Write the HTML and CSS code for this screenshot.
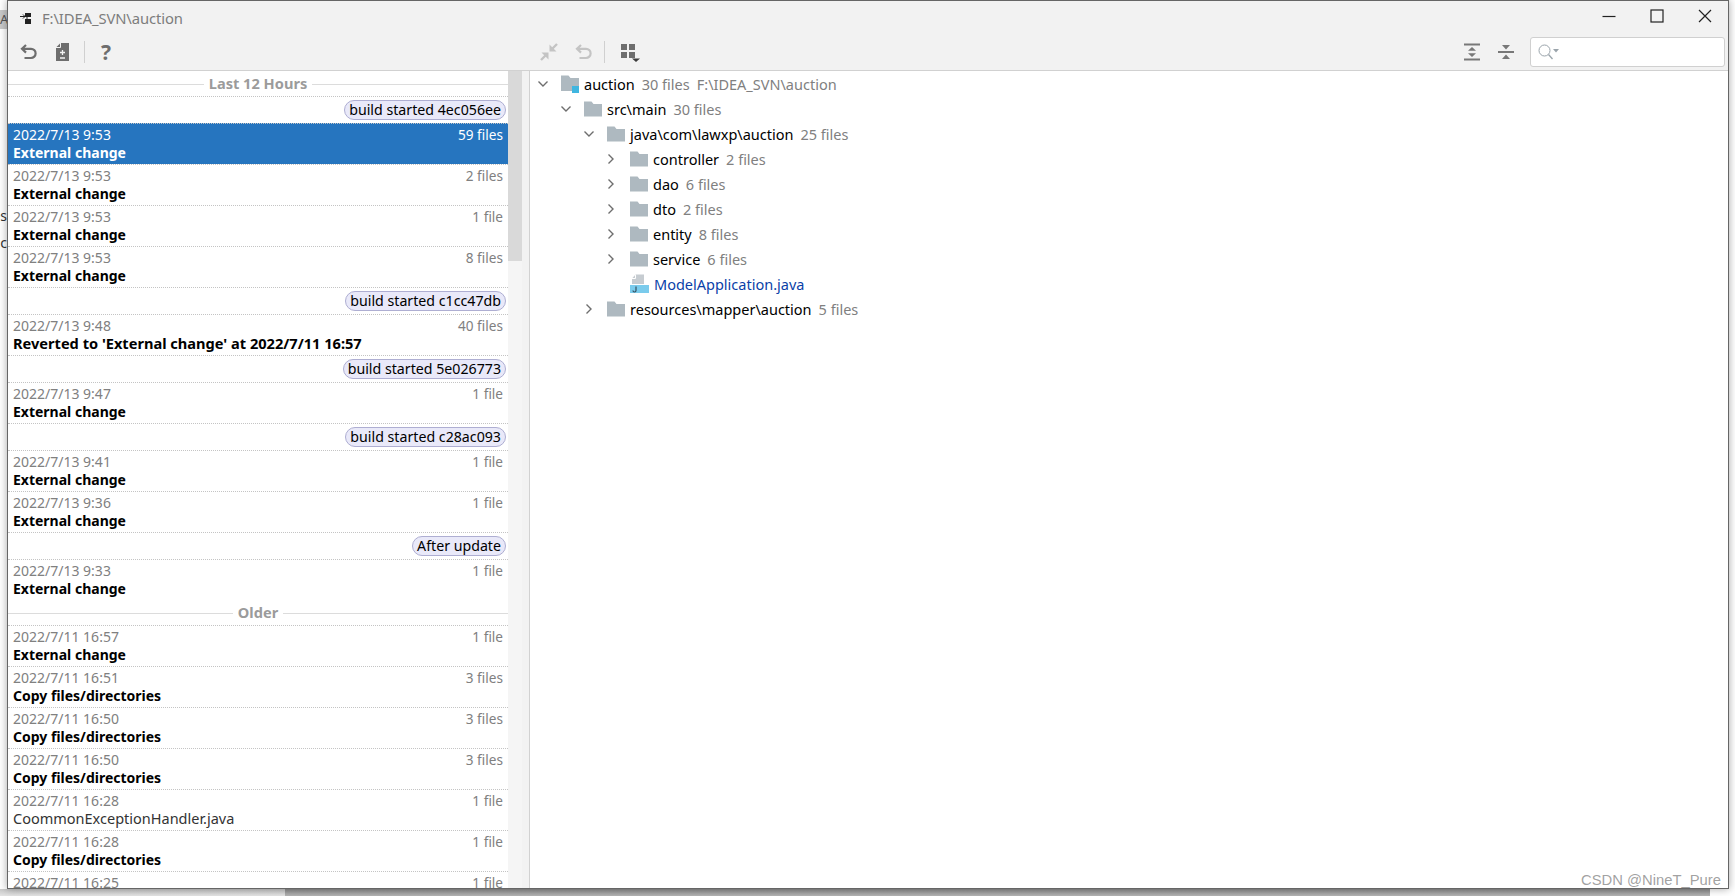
FILE: index.html
```html
<!DOCTYPE html>
<html lang="en">
<head>
<meta charset="utf-8">
<title>Local History</title>
<link rel="stylesheet" href="styles.css">
</head>
<body>
<svg class="defs" width="0" height="0" aria-hidden="true">
  <symbol id="folder" viewBox="0 0 18 16"><path d="M0 0.5H7.5L9.5 3H18V15.5H0Z" fill="#aeb9c0"/></symbol>
  <symbol id="down" viewBox="0 0 12 12"><path d="M1.5 3.5L6 8L10.5 3.5" fill="none" stroke="#6e6e6e" stroke-width="1.4"/></symbol>
  <symbol id="right" viewBox="0 0 12 12"><path d="M3.5 1.5L8 6L3.5 10.5" fill="none" stroke="#6e6e6e" stroke-width="1.4"/></symbol>
  <symbol id="undo" viewBox="0 0 17 16"><path d="M6 1L2 4.8L6 8.6M2.4 4.8H11A4.6 4.6 0 0 1 11 14H4.5" fill="none" stroke="currentColor" stroke-width="2.2"/></symbol>
  <symbol id="merge" viewBox="0 0 18 18"><path d="M17 1L11 7M7 11L1 17" fill="none" stroke="currentColor" stroke-width="2.4"/><path d="M9.5 1.5V8.5H16.5ZM1.5 9.5H8.5V16.5Z" fill="currentColor"/></symbol>
</svg>

<div class="bg-chip">A</div>
<div class="bg-text bg-es">es</div>
<div class="bg-text bg-c">c</div>

<main class="window">
  <header class="titlebar">
    <svg class="app-icon" width="11" height="11" viewBox="0 0 11 11"><path d="M5 0H11V4H5ZM5 6H11V11H5Z" fill="#222"/><path d="M0 3.5H5M3 1.5L5 3.5L3 5.5M7 4V7" fill="none" stroke="#222" stroke-width="1"/></svg>
    <span class="title">F:\IDEA_SVN\auction</span>
    <div class="controls">
      <button class="ctl" aria-label="Minimize"><svg width="14" height="14" viewBox="0 0 14 14"><path d="M0.5 7.5H13.5" stroke="#222" stroke-width="1.2"/></svg></button>
      <button class="ctl" aria-label="Maximize"><svg width="14" height="14" viewBox="0 0 14 14"><rect x="1" y="1" width="12" height="12" fill="none" stroke="#222" stroke-width="1.2"/></svg></button>
      <button class="ctl ctl-last" aria-label="Close"><svg width="14" height="14" viewBox="0 0 14 14"><path d="M1 1L13 13M13 1L1 13" stroke="#222" stroke-width="1.2"/></svg></button>
    </div>
  </header>

  <nav class="toolbar">
    <div class="tools-left">
      <svg class="tool dark" width="17" height="16"><use href="#undo"/></svg>
      <svg class="tool patch" width="13" height="18" viewBox="0 0 13 18"><path d="M4.5 0H13V18H0V4.5Z" fill="#6e6e6e"/><path d="M6.5 7V12M4 9.5H9M4 15H9" stroke="#f2f2f2" stroke-width="1.3" fill="none"/><path d="M4.5 0V4.5H0" fill="none" stroke="#f2f2f2" stroke-width="1"/></svg>
      <span class="sep sep-a"></span>
      <span class="help">?</span>
    </div>
    <div class="tools-mid">
      <svg class="tool light" width="18" height="18"><use href="#merge"/></svg>
      <svg class="tool light undo2" width="17" height="16"><use href="#undo"/></svg>
      <span class="sep sep-b"></span>
      <svg class="tool grid" width="20" height="18" viewBox="0 0 20 18"><path d="M0 0H6V6H0ZM8 0H14V6H8ZM0 8H6V14H0ZM8 8H14V14H8Z" fill="#6e6e6e"/><path d="M11 14.5H19L15 18Z" fill="#3c3c3c"/></svg>
    </div>
    <div class="tools-right">
      <svg class="tool" width="16" height="18" viewBox="0 0 16 18"><path d="M0 0.5H16V2.5H0ZM0 15.5H16V17.5H0Z" fill="#787878"/><path d="M8 4L12 7.7H4ZM8 14L4 10.3H12Z" fill="#787878"/></svg>
      <svg class="tool collapse" width="16" height="16" viewBox="0 0 16 16"><path d="M0 7H16V9H0Z" fill="#787878"/><path d="M8 5.5L4 1H12ZM8 10.5L12 15H4Z" fill="#787878"/></svg>
      <div class="search">
        <svg width="22" height="16" viewBox="0 0 22 16"><circle cx="6.5" cy="6.5" r="5.5" fill="none" stroke="#9aa4ab" stroke-width="1"/><path d="M10.5 10.5L14.5 15" stroke="#9aa4ab" stroke-width="1.3"/><path d="M15 5H21L18 8.5Z" fill="#9aa4ab"/></svg>
      </div>
    </div>
  </nav>

  <div class="body">
    <section class="history">
      <div class="list">
        <div class="group"><span class="group-name">Last 12 Hours</span></div>
        <div class="label"><span class="pill">build started 4ec056ee</span></div>
        <article class="row selected"><div class="meta"><span>2022/7/13 9:53</span><span class="count">59 files</span></div><div class="name">External change</div></article>
        <article class="row"><div class="meta"><span>2022/7/13 9:53</span><span class="count">2 files</span></div><div class="name">External change</div></article>
        <article class="row"><div class="meta"><span>2022/7/13 9:53</span><span class="count">1 file</span></div><div class="name">External change</div></article>
        <article class="row"><div class="meta"><span>2022/7/13 9:53</span><span class="count">8 files</span></div><div class="name">External change</div></article>
        <div class="label"><span class="pill">build started c1cc47db</span></div>
        <article class="row"><div class="meta"><span>2022/7/13 9:48</span><span class="count">40 files</span></div><div class="name long">Reverted to 'External change' at 2022/7/11 16:57</div></article>
        <div class="label"><span class="pill">build started 5e026773</span></div>
        <article class="row"><div class="meta"><span>2022/7/13 9:47</span><span class="count">1 file</span></div><div class="name">External change</div></article>
        <div class="label"><span class="pill">build started c28ac093</span></div>
        <article class="row"><div class="meta"><span>2022/7/13 9:41</span><span class="count">1 file</span></div><div class="name">External change</div></article>
        <article class="row"><div class="meta"><span>2022/7/13 9:36</span><span class="count">1 file</span></div><div class="name">External change</div></article>
        <div class="label"><span class="pill">After update</span></div>
        <article class="row"><div class="meta"><span>2022/7/13 9:33</span><span class="count">1 file</span></div><div class="name">External change</div></article>
        <div class="group"><span class="group-name">Older</span></div>
        <article class="row"><div class="meta"><span>2022/7/11 16:57</span><span class="count">1 file</span></div><div class="name">External change</div></article>
        <article class="row"><div class="meta"><span>2022/7/11 16:51</span><span class="count">3 files</span></div><div class="name">Copy files/directories</div></article>
        <article class="row"><div class="meta"><span>2022/7/11 16:50</span><span class="count">3 files</span></div><div class="name">Copy files/directories</div></article>
        <article class="row"><div class="meta"><span>2022/7/11 16:50</span><span class="count">3 files</span></div><div class="name">Copy files/directories</div></article>
        <article class="row"><div class="meta"><span>2022/7/11 16:28</span><span class="count">1 file</span></div><div class="name plain">CoommonExceptionHandler.java</div></article>
        <article class="row"><div class="meta"><span>2022/7/11 16:28</span><span class="count">1 file</span></div><div class="name">Copy files/directories</div></article>
        <article class="row"><div class="meta"><span>2022/7/11 16:25</span><span class="count">1 file</span></div><div class="name">Copy files/directories</div></article>
      </div>
      <div class="scrollbar"><div class="thumb"></div></div>
    </section>
    <div class="splitter"></div>
    <section class="tree">
      <div class="node l0"><svg class="chev" width="12" height="12"><use href="#down"/></svg>
        <svg class="ficon" width="18" height="18" viewBox="0 0 18 18"><path d="M0 0.5H7.5L9.5 3H18V12H12V16H0Z" fill="#aeb9c0"/><rect x="11" y="11" width="8" height="7" fill="#40b6e0"/></svg>
        <span class="n">auction</span><span class="c">30 files</span><span class="c">F:\IDEA_SVN\auction</span></div>
      <div class="node l1"><svg class="chev" width="12" height="12"><use href="#down"/></svg><svg class="ficon" width="18" height="16"><use href="#folder"/></svg><span class="n">src\main</span><span class="c">30 files</span></div>
      <div class="node l2"><svg class="chev" width="12" height="12"><use href="#down"/></svg><svg class="ficon" width="18" height="16"><use href="#folder"/></svg><span class="n">java\com\lawxp\auction</span><span class="c">25 files</span></div>
      <div class="node l3"><svg class="chev" width="12" height="12"><use href="#right"/></svg><svg class="ficon" width="18" height="16"><use href="#folder"/></svg><span class="n">controller</span><span class="c">2 files</span></div>
      <div class="node l3"><svg class="chev" width="12" height="12"><use href="#right"/></svg><svg class="ficon" width="18" height="16"><use href="#folder"/></svg><span class="n">dao</span><span class="c">6 files</span></div>
      <div class="node l3"><svg class="chev" width="12" height="12"><use href="#right"/></svg><svg class="ficon" width="18" height="16"><use href="#folder"/></svg><span class="n">dto</span><span class="c">2 files</span></div>
      <div class="node l3"><svg class="chev" width="12" height="12"><use href="#right"/></svg><svg class="ficon" width="18" height="16"><use href="#folder"/></svg><span class="n">entity</span><span class="c">8 files</span></div>
      <div class="node l3"><svg class="chev" width="12" height="12"><use href="#right"/></svg><svg class="ficon" width="18" height="16"><use href="#folder"/></svg><span class="n">service</span><span class="c">6 files</span></div>
      <div class="node l3"><span class="chev-space"></span><svg class="ficon" width="19" height="19" viewBox="0 0 19 19"><path d="M5.5 0.5H14V10H2V4.5Z" fill="#c6ccd1"/><path d="M5.5 0.5V4.5H2" fill="none" stroke="#fff" stroke-width="1"/><rect x="0" y="11" width="19" height="8" fill="#7acbec"/><path d="M6 12.5V16.5A1.5 1.5 0 0 1 3 16.5" fill="none" stroke="#35505f" stroke-width="1.2"/></svg><span class="n file">ModelApplication.java</span></div>
      <div class="node l2"><svg class="chev" width="12" height="12"><use href="#right"/></svg><svg class="ficon" width="18" height="16"><use href="#folder"/></svg><span class="n">resources\mapper\auction</span><span class="c">5 files</span></div>
    </section>
  </div>
  <span class="watermark">CSDN @NineT_Pure</span>
</main>

<footer class="desk">
  <div class="desk-light"></div>
  <div class="desk-dark"></div>
  <div class="desk-end"></div>
</footer>
</body>
</html>
```
FILE: styles.css
```css
* { box-sizing: border-box; }
html, body { height: 100%; }
body {
  margin: 0;
  height: 896px;
  overflow: hidden;
  position: relative;
  background: #fff;
  font-family: "Noto Sans", "Open Sans", sans-serif;
  font-size: 14px;
  display: flex;
  flex-direction: column;
}
.defs { position: absolute; }

.bg-chip {
  position: absolute; left: 0; top: 10px; width: 7px; height: 19px;
  background: #c9c9c9; color: #555; font-size: 13px; line-height: 19px; overflow: hidden;
}
.bg-text { position: absolute; right: calc(100% - 7px); font-size: 14px; color: #333; line-height: 16px; white-space: nowrap; }
.bg-es { top: 208px; }
.bg-c { top: 235px; }

.window {
  position: relative;
  z-index: 1;
  width: 1722px;
  height: 889px;
  margin-left: 7px;
  flex: none;
  display: flex;
  flex-direction: column;
  background: #f2f2f2;
  border: 1px solid #666;
  box-shadow: 0 0 8px rgba(0,0,0,.35);
}

.titlebar { height: 34px; display: flex; align-items: center; padding-left: 12px; flex: none; }
.app-icon { flex: none; }
.title { margin-left: 11px; color: #7d7d7d; font-size: 14.8px; letter-spacing: -.1px; }
.controls { margin-left: auto; display: flex; align-self: flex-start; }
.ctl { width: 48px; height: 30px; border: 0; padding: 0; background: none; display: flex; align-items: center; justify-content: center; }
.ctl-last { width: 47px; }

.toolbar { height: 36px; padding-bottom: 1px; display: flex; align-items: center; flex: none; border-bottom: 1px solid #d1d1d1; }
.tools-left { width: 532px; display: flex; align-items: center; padding-left: 12px; }
.tools-mid { display: flex; align-items: center; }
.tools-right { margin-left: auto; display: flex; align-items: center; }
.tool { display: block; flex: none; }
.dark { color: #6e6e6e; }
.light { color: #c4c4c4; }
.patch { margin-left: 19px; }
.sep { width: 1px; height: 22px; background: #d0d0d0; flex: none; }
.sep-a { margin-left: 15px; }
.help { margin-left: 16px; font-size: 21px; font-weight: 700; line-height: 22px; color: #6e6e6e; }
.undo2 { margin-left: 17px; }
.sep-b { margin-left: 12px; }
.grid { margin-left: 16px; margin-top: 1px; }
.collapse { margin-left: 18px; }
.search {
  width: 195px; height: 30px; margin: 0 3px 0 16px;
  background: #fff; border: 1px solid #d0d0d0; border-radius: 3px;
  display: flex; align-items: center; padding-left: 7px;
}

.body { flex: 1; display: flex; min-height: 0; }
.history { width: 514px; display: flex; flex: none; background: #fff; }
.list { width: 500px; flex: none; overflow: hidden; }
.scrollbar { width: 14px; background: #f5f5f5; border-right: 1px solid #d1d1d1; box-sizing: content-box; margin-right: -1px; }
.thumb { height: 190px; background: #d9d9d9; }
.splitter { width: 7px; flex: none; background: #f2f2f2; }

.group {
  height: 25px; display: flex; align-items: center; gap: 5px;
  color: #9b9b9b; font-weight: 700; font-size: 14.6px;
}
.group::before, .group::after { content: ""; flex: 1; height: 1px; margin-top: 2px; background: #dcdcdc; }
.group-name { line-height: 25px; }

.label {
  height: 27px; border-top: 1px dotted #c4c4c4;
  display: flex; justify-content: flex-end; align-items: center; padding-right: 2px;
}
.pill {
  height: 20px; line-height: 18px; padding: 0 4px;
  border: 1px solid #aeaed2; border-radius: 10px;
  background: #e9e9f9; color: #000; font-size: 14.2px;
}

.row { height: 41px; border-top: 1px dotted #c4c4c4; padding: 1px 5px 0 5px; background: #fff; }
.meta { display: flex; justify-content: space-between; color: #808080; line-height: 20px; height: 18px; }
.count { font-size: 13.6px; }
.name { color: #000; font-weight: 700; line-height: 19px; white-space: nowrap; }
.name.long { font-size: 14.6px; }
.name.plain { font-weight: 400; color: #333; font-size: 14.5px; }
.selected { background: #2675bf; }
.selected .meta, .selected .name { color: #fff; }

.tree { flex: 1; min-width: 0; background: #fff; border-left: 1px solid #d1d1d1; font-size: 14.5px; }
.node { height: 25px; display: flex; align-items: center; white-space: nowrap; }
.l0 { padding-left: 7px; }
.l1 { padding-left: 30px; }
.l2 { padding-left: 53px; }
.l3 { padding-left: 75px; }
.chev, .chev-space { width: 12px; height: 12px; flex: none; display: block; }
.ficon { margin-left: 12px; flex: none; display: block; }
.l3 .ficon { margin-left: 13px; }
.n { margin-left: 5px; color: #000; }
.c { margin-left: 7px; color: #808080; }
.file { color: #0a3fa8; }

.watermark {
  position: absolute; right: 7px; bottom: -1px; z-index: 2;
  font-family: "Liberation Sans", Arial, sans-serif;
  font-size: 14.8px; line-height: 18px; color: rgba(120,120,120,.7);
}

.desk { flex: 1; display: flex; min-height: 0; }
.desk-light { width: 285px; background: linear-gradient(#c9c9c9, #e4e4e4); }
.desk-dark { flex: 1; background: linear-gradient(#8e8e8e, #b4b4b4); }
.desk-end { width: 25px; background: #fff; }
```
